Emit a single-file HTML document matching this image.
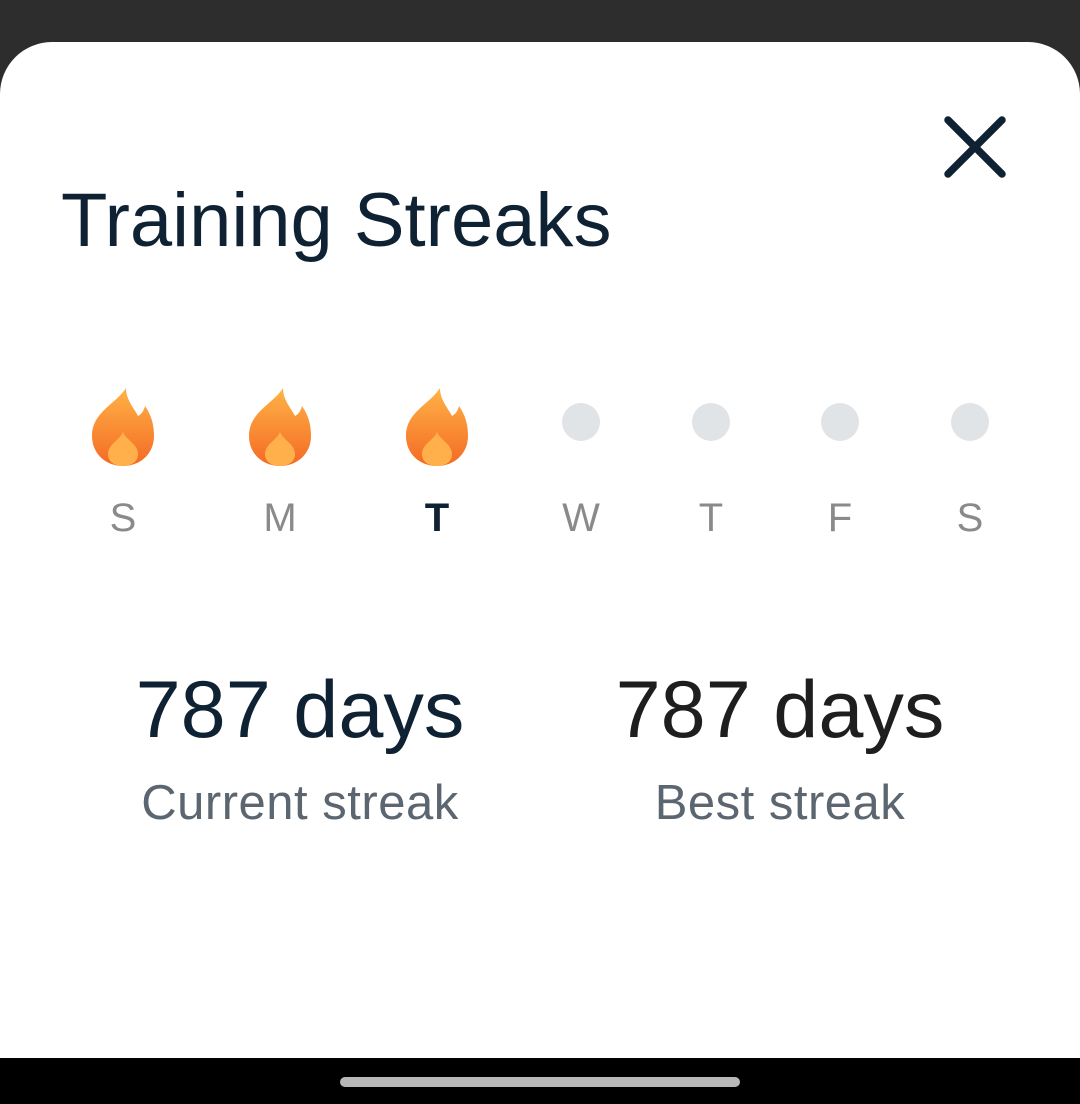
<!DOCTYPE html>
<html><head><style>
html,body{margin:0;padding:0;width:1080px;height:1104px;overflow:hidden;background:#2d2d2d;font-family:"Liberation Sans",sans-serif}
.sheet{position:absolute;left:0;top:42px;width:1080px;height:1020px;background:#fff;border-radius:52px 52px 0 0}
.bar{position:absolute;left:0;top:1058px;width:1080px;height:46px;background:#000}
.pill{position:absolute;left:340px;top:1077px;width:400px;height:10px;border-radius:5px;background:#b8b8b8}
.title{position:absolute;left:61px;top:177px;font-size:76px;color:#0f2233;white-space:nowrap}
.day{position:absolute;top:496px;font-size:40px;color:#8a8a8a;width:80px;text-align:center;margin-left:-40px}
.dot{position:absolute;top:403px;width:38px;height:38px;border-radius:50%;background:#e1e4e7;margin-left:-19px}
.flame{position:absolute;top:386px;margin-left:-33px}
.num{position:absolute;top:664px;font-size:81px;width:500px;text-align:center;margin-left:-250px;white-space:nowrap}
.lbl{position:absolute;top:775px;font-size:49px;color:#5c6670;width:500px;text-align:center;margin-left:-250px;white-space:nowrap;letter-spacing:0.5px}
</style></head><body>
<div class="sheet"></div>
<svg style="position:absolute;left:944px;top:116px" width="62" height="62" viewBox="0 0 62 62"><path d="M4 4L58 58M58 4L4 58" stroke="#0f2233" stroke-width="7.5" stroke-linecap="round"/></svg>
<div class="title">Training Streaks</div>

<svg width="0" height="0" style="position:absolute"><defs>
<linearGradient id="g" x1="0" y1="0" x2="0" y2="1"><stop offset="0" stop-color="#ffb347"/><stop offset="1" stop-color="#f46a24"/></linearGradient>
<symbol id="f" viewBox="0 0 66 82"><path d="M36 2C36 14 44 22 48 30C52 28 54 24 55 20C62 30 64 40 64 50C64 68 50 80 33 80C16 80 2 68 2 50C2 26 26 18 36 2Z" fill="url(#g)"/><path d="M33 46C36 54 48 58 48 68C48 76 41 80 33 80C25 80 18 76 18 68C18 58 30 54 33 46Z" fill="#ffb04a"/></symbol>
</defs></svg>
<svg class="flame" style="left:123px" width="66" height="82"><use href="#f"/></svg>
<svg class="flame" style="left:280px" width="66" height="82"><use href="#f"/></svg>
<svg class="flame" style="left:437px" width="66" height="82"><use href="#f"/></svg>
<div class="dot" style="left:581px"></div>
<div class="dot" style="left:711px"></div>
<div class="dot" style="left:840px"></div>
<div class="dot" style="left:970px"></div>

<div class="day" style="left:123px">S</div>
<div class="day" style="left:280px">M</div>
<div class="day" style="left:437px;color:#0f2233;font-weight:bold">T</div>
<div class="day" style="left:581px">W</div>
<div class="day" style="left:711px">T</div>
<div class="day" style="left:840px">F</div>
<div class="day" style="left:970px">S</div>

<div class="num" style="left:300px;color:#0f2233">787 days</div>
<div class="lbl" style="left:300px">Current streak</div>
<div class="num" style="left:780px;color:#1e1e1e">787 days</div>
<div class="lbl" style="left:780px">Best streak</div>

<div class="bar"></div>
<div class="pill"></div>
</body></html>
